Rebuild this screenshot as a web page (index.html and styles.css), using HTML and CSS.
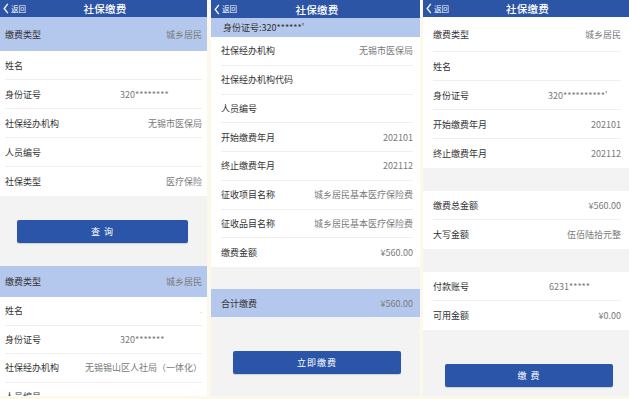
FILE: index.html
```html
<!DOCTYPE html>
<html lang="zh-CN">
<head>
<meta charset="utf-8">
<link rel="stylesheet" href="styles.css">
</head>
<body>
<div class="screens">
  <!-- Panel 1 -->
  <section class="panel p1">
    <header class="bar">
      <span class="back"><svg class="chev" viewBox="0 0 6 12" width="6" height="11"><polyline points="5,1 1,6 5,11" fill="none" stroke="#fff" stroke-width="1.4"/></svg>返回</span>
      <span class="title">社保缴费</span>
      <span></span>
    </header>
    <div class="row hl h34"><span class="lab">缴费类型</span><span class="val">城乡居民</span></div>
    <div class="list">
      <div class="row"><span class="lab">姓名</span></div>
      <div class="row"><span class="lab">身份证号</span><span class="val id">320********</span></div>
      <div class="row"><span class="lab">社保经办机构</span><span class="val">无锡市医保局</span></div>
      <div class="row"><span class="lab">人员编号</span></div>
      <div class="row"><span class="lab">社保类型</span><span class="val">医疗保险</span></div>
    </div>
    <div class="gap g1"><div class="btn">查 询</div></div>
    <div class="row hl h31"><span class="lab">缴费类型</span><span class="val">城乡居民</span></div>
    <div class="list tight">
      <div class="row"><span class="lab">姓名</span><span class="dash">-</span></div>
      <div class="row"><span class="lab">身份证号</span><span class="val id id2">320*******</span></div>
      <div class="row"><span class="lab">社保经办机构</span><span class="val">无锡锡山区人社局（一体化）</span></div>
      <div class="row"><span class="lab">人员编号</span></div>
    </div>
  </section>

  <!-- Panel 2 -->
  <section class="panel p2">
    <header class="bar b18">
      <span class="back"><svg class="chev" viewBox="0 0 6 12" width="6" height="11"><polyline points="5,1 1,6 5,11" fill="none" stroke="#fff" stroke-width="1.4"/></svg>返回</span>
      <span class="title">社保缴费</span>
      <span></span>
    </header>
    <div class="idbar">身份证号:320******'</div>
    <div class="list">
      <div class="row"><span class="lab">社保经办机构</span><span class="val">无锡市医保局</span></div>
      <div class="row"><span class="lab">社保经办机构代码</span></div>
      <div class="row"><span class="lab">人员编号</span></div>
      <div class="row"><span class="lab">开始缴费年月</span><span class="val">202101</span></div>
      <div class="row"><span class="lab">终止缴费年月</span><span class="val">202112</span></div>
      <div class="row"><span class="lab">征收项目名称</span><span class="val">城乡居民基本医疗保险费</span></div>
      <div class="row"><span class="lab">征收品目名称</span><span class="val">城乡居民基本医疗保险费</span></div>
      <div class="row"><span class="lab">缴费金额</span><span class="val">¥560.00</span></div>
    </div>
    <div class="gap g2"></div>
    <div class="row hl h28"><span class="lab">合计缴费</span><span class="val">¥560.00</span></div>
    <div class="gap g3"><div class="btn">立即缴费</div></div>
  </section>

  <!-- Panel 3 -->
  <section class="panel p3">
    <header class="bar">
      <span class="back"><svg class="chev" viewBox="0 0 6 12" width="6" height="11"><polyline points="5,1 1,6 5,11" fill="none" stroke="#fff" stroke-width="1.4"/></svg>返回</span>
      <span class="title">社保缴费</span>
      <span></span>
    </header>
    <div class="list">
      <div class="row first"><span class="lab">缴费类型</span><span class="val">城乡居民</span></div>
      <div class="row"><span class="lab">姓名</span></div>
      <div class="row"><span class="lab">身份证号</span><span class="val id id3">320**********'</span></div>
      <div class="row"><span class="lab">开始缴费年月</span><span class="val">202101</span></div>
      <div class="row"><span class="lab">终止缴费年月</span><span class="val">202112</span></div>
    </div>
    <div class="gap g4"></div>
    <div class="list">
      <div class="row"><span class="lab">缴费总金额</span><span class="val">¥560.00</span></div>
      <div class="row"><span class="lab">大写金额</span><span class="val">伍佰陆拾元整</span></div>
    </div>
    <div class="gap g5"></div>
    <div class="list">
      <div class="row"><span class="lab">付款账号</span><span class="val id acct">6231*****</span></div>
      <div class="row"><span class="lab">可用金额</span><span class="val">¥0.00</span></div>
    </div>
    <div class="gap g6"><div class="btn">缴 费</div></div>
  </section>
</div>
</body>
</html>
```
FILE: styles.css
```css
* { box-sizing: border-box; }
html, body { margin: 0; padding: 0; }
body {
  width: 629px;
  height: 399px;
  overflow: hidden;
  background: #fdf9ea;
  font-family: "Noto Sans CJK SC", "Noto Sans", sans-serif;
  font-size: 9px;
  color: #333;
}
.screens {
  display: flex;
  height: 396px;
}
.panel {
  height: 396px;
  overflow: hidden;
  background: #f3f3f4;
  display: flex;
  flex-direction: column;
  flex: none;
}
.p1 { width: 207px; margin-right: 4px; --pl: 5px; --pr: 5px; }
.p2 { width: 209px; margin-right: 3px; --pl: 10px; --pr: 7px; }
.p3 { width: 206px; --pl: 10px; --pr: 8px; }

.bar {
  flex: none;
  height: 17px;
  background: #2c55a5;
  color: #fff;
  display: grid;
  grid-template-columns: 1fr auto 1fr;
  align-items: center;
  padding-left: 3px;
}
.bar.b18 { height: 18px; }
.back {
  display: flex;
  align-items: center;
  gap: 2px;
  font-size: 7.5px;
  line-height: 1;
}
.chev { display: block; }
.title {
  font-size: 10.5px;
  font-weight: 500;
  letter-spacing: 0.3px;
}

.row {
  flex: none;
  height: 29px;
  display: flex;
  align-items: center;
  justify-content: space-between;
  white-space: nowrap;
}
.lab { color: #333; }
.val { color: #7a7a7a; margin-left: auto; }
.dash { color: #ccc; margin-left: auto; font-size: 7px; }

.list {
  flex: none;
  background: #fff;
  padding: 0 var(--pr) 0 var(--pl);
}
.list .row { border-bottom: 1px solid #efefef; }
.list .row:last-child { border-bottom: none; }
.list.tight .row { height: 28.5px; }
.p2 .list .row { height: 28.75px; }
.p3 .list .row { height: 29px; }
.p3 .list .row.first { height: 35px; }
.p3 .list .row:nth-child(2),
.p3 .list .row:nth-child(3),
.p3 .list .row:nth-child(4) { height: 29px; }

.hl {
  background: #b4c7ec;
  padding: 0 var(--pr) 0 var(--pl);
}
.h34 { height: 34px; }
.h31 { height: 31px; }
.h28 { height: 28px; }

.id { text-align: left; width: 82px; }
.id2 { width: 82px; }
.id3 { width: 73px; }
.acct { width: 72px; }

.idbar {
  flex: none;
  height: 19px;
  background: #b4c7ec;
  padding-left: 12px;
  display: flex;
  align-items: center;
  color: #333;
}

.gap { flex: none; background: #f3f3f4; }
.g1 { height: 70px; padding: 24px 19px 0 17px; }
.g2 { height: 22px; }
.g3 { flex: 1; padding: 34px 19px 0 22px; }
.g4 { height: 23px; }
.g5 { height: 23px; }
.g6 { flex: 1; padding: 34px 16px 0 22px; }

.btn {
  height: 23px;
  background: #2b55a8;
  color: #fff;
  border-radius: 2px;
  display: flex;
  align-items: center;
  justify-content: center;
  font-size: 9px;
  letter-spacing: 1px;
  box-shadow: 0 1px 1px rgba(0,0,0,0.15);
}
```
